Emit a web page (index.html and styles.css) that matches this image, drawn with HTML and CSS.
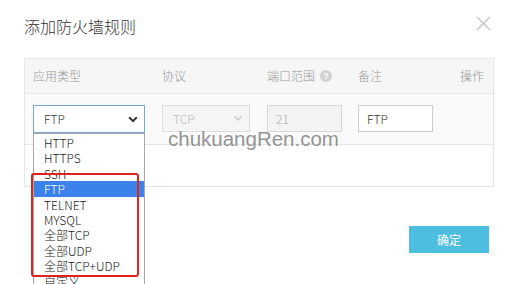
FILE: index.html
```html
<!DOCTYPE html>
<html lang="zh">
<head>
<meta charset="utf-8">
<title>添加防火墙规则</title>
<link rel="stylesheet" href="styles.css">
</head>
<body>
<div class="dialog">
  <div class="head">
    <div class="title">添加防火墙规则</div>
    <svg class="close" width="15" height="15" viewBox="0 0 15 15"><path d="M1 1L14 14M14 1L1 14" stroke="#c4c4c4" stroke-width="1.4" fill="none"/></svg>
  </div>
  <div class="table">
    <div class="row thead">
      <div class="cell">应用类型</div>
      <div class="cell">协议</div>
      <div class="cell">端口范围<span class="qicon">?</span></div>
      <div class="cell">备注</div>
      <div class="cell op">操作</div>
    </div>
    <div class="row tbody">
      <div class="cell">
        <div class="select active">
          <span>FTP</span>
          <svg width="10" height="7" viewBox="0 0 10 7"><path d="M1.2 1.3L5 5.1L8.8 1.3" stroke="#333" stroke-width="2" fill="none"/></svg>
        </div>
      </div>
      <div class="cell">
        <div class="select disabled">
          <span>TCP</span>
          <svg width="10" height="7" viewBox="0 0 10 7"><path d="M1.5 1.5L5 5L8.5 1.5" stroke="#c8c8c8" stroke-width="1.4" fill="none"/></svg>
        </div>
      </div>
      <div class="cell"><div class="input disabled">21</div></div>
      <div class="cell"><div class="input">FTP</div></div>
      <div class="cell"></div>
    </div>
    <div class="row empty"></div>
  </div>
  <div class="foot">
    <button class="btn">确定</button>
  </div>
  <ul class="options">
    <li>HTTP</li>
    <li>HTTPS</li>
    <li>SSH</li>
    <li class="sel">FTP</li>
    <li>TELNET</li>
    <li>MYSQL</li>
    <li>全部TCP</li>
    <li>全部UDP</li>
    <li>全部TCP+UDP</li>
    <li>自定义</li>
  </ul>
  <div class="mark"></div>
  <div class="watermark">chukuangRen.com</div>
</div>
</body>
</html>
```
FILE: styles.css
```css
html, body {
  margin: 0;
  padding: 0;
  background: #fff;
  overflow: hidden;
}
body {
  font-family: "Noto Sans CJK SC", "Noto Sans", sans-serif;
  font-weight: 300;
  color: #333;
}
.dialog {
  position: relative;
  width: 512px;
  height: 284px;
  padding: 0 18px 0 24px;
  box-sizing: border-box;
}
.head {
  display: flex;
  justify-content: space-between;
  align-items: flex-start;
  height: 58px;
}
.title {
  margin-top: 16px;
  font-size: 16px;
  line-height: 20px;
  color: #333;
}
.close {
  margin-top: 16px;
  margin-right: 3px;
}
.table {
  width: 470px;
  border: 1px solid #e6e6e6;
  box-sizing: border-box;
}
.row {
  display: grid;
  grid-template-columns: 129px 105px 91px 1fr auto;
  padding: 0 9px 0 8px;
  border-bottom: 1px solid #e6e6e6;
}
.row:last-child { border-bottom: none; }
.thead {
  height: 34px;
  align-items: center;
  background: #f6f6f6;
  font-size: 12px;
  color: #999;
}
.thead .cell { display: flex; align-items: center; line-height: 16px; }
.op { justify-content: flex-end; }
.qicon {
  display: inline-block;
  width: 12px;
  height: 12px;
  margin-left: 5px;
  border-radius: 50%;
  background: #d2d2d2;
  color: #fff;
  font-size: 9px;
  line-height: 12px;
  text-align: center;
  font-family: "Liberation Sans", sans-serif;
  font-weight: bold;
}
.tbody {
  height: 51px;
  padding-top: 11px;
  box-sizing: border-box;
  background: #fafafa;
}
.empty { height: 41px; }
.select, .input {
  height: 27px;
  box-sizing: border-box;
  border: 1px solid #ccc;
  background: #fff;
  font-size: 12px;
  display: flex;
  align-items: center;
  padding-left: 10px;
  line-height: 16px;
}
.select {
  justify-content: space-between;
  padding-right: 6px;
}
.select.active {
  width: 112px;
  height: 28px;
  border-color: #7ea4d2;
  color: #333;
}
.select.disabled {
  width: 88px;
  background: #f5f5f5;
  border-color: #dedede;
  color: #bdbdbd;
}
.input { width: 75px; color: #333; padding-left: 8px; }
.input.disabled { background: #f3f3f3; border-color: #d8d8d8; color: #aaa; }
.foot {
  display: flex;
  justify-content: flex-end;
  padding-top: 39px;
  padding-right: 5px;
}
.btn {
  width: 80px;
  height: 27px;
  border: none;
  background: #4dbde0;
  color: #fff;
  font-family: "Noto Sans CJK SC", sans-serif;
  font-size: 12px;
  padding: 0;
}
.options {
  position: absolute;
  left: 33px;
  top: 133px;
  width: 112px;
  margin: 0;
  padding: 1px 0 0;
  list-style: none;
  box-sizing: border-box;
  border: 1px solid #a8a8a8;
  background: #fff;
  font-size: 12px;
  color: #222;
}
.options li {
  height: 15.4px;
  line-height: 15.4px;
  padding-left: 10px;
  white-space: nowrap;
}
.options li.sel {
  background: #3b82ea;
  color: #fff;
}
.mark {
  position: absolute;
  left: 31px;
  top: 173px;
  width: 108px;
  height: 104px;
  box-sizing: border-box;
  border: 2px solid #e1231f;
  border-radius: 3px;
}
.watermark {
  position: absolute;
  left: 168px;
  top: 128px;
  font-family: "Liberation Sans", Arial, sans-serif;
  font-size: 20.5px;
  font-weight: normal;
  line-height: 21px;
  color: rgba(120, 120, 120, 0.8);
  white-space: nowrap;
}
```
